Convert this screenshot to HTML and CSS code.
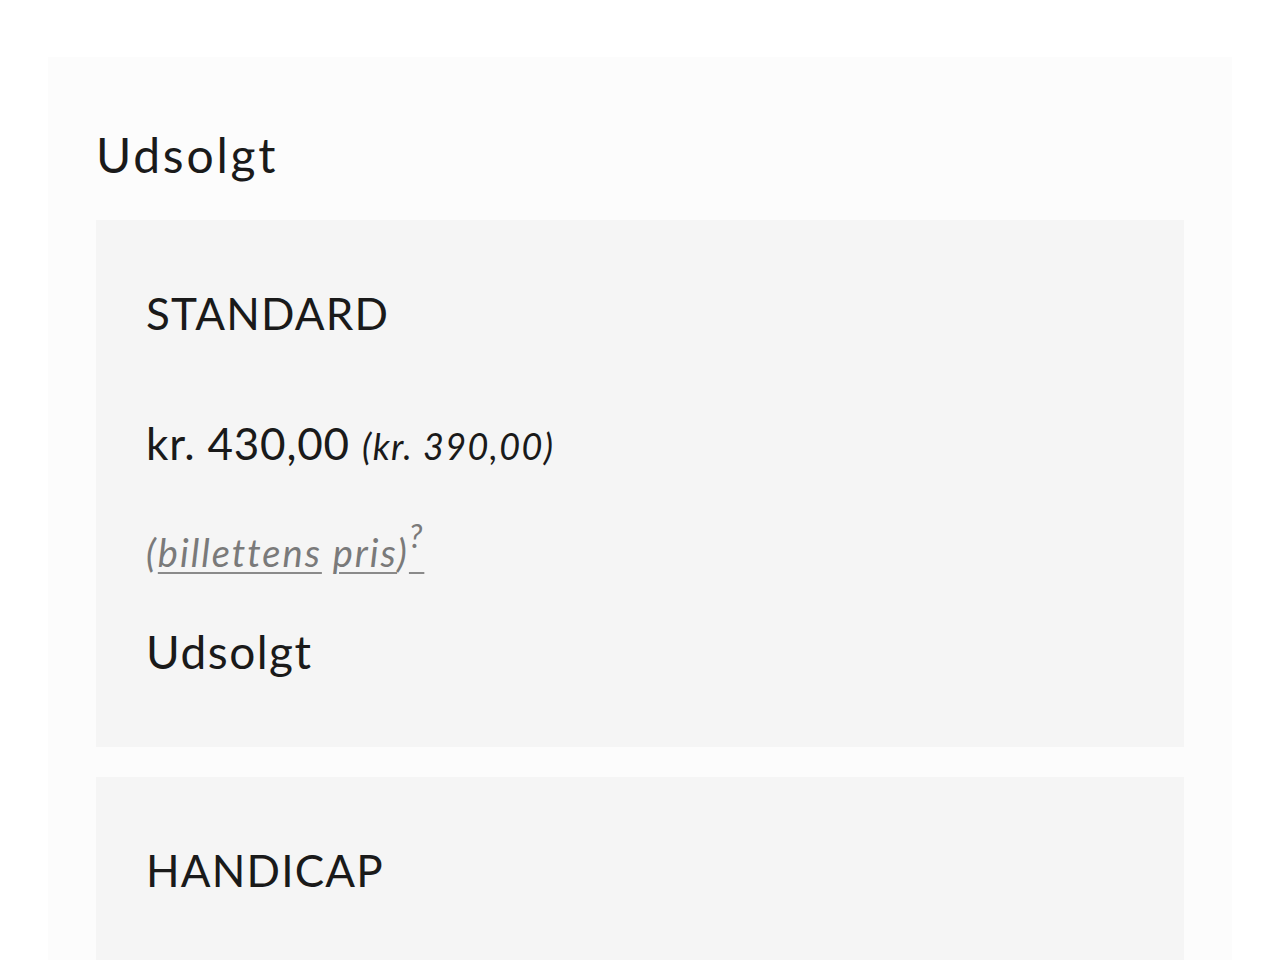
FILE: index.html
```html
<!DOCTYPE html>
<html lang="da">
<head>
<meta charset="utf-8">
<title>Billetter</title>
<link rel="stylesheet" href="styles.css">
</head>
<body>
<main class="panel">
  <h2 class="panel-title">Udsolgt</h2>
  <section class="ticket">
    <h3 class="ticket-name">STANDARD</h3>
    <p class="ticket-price">kr. 430,00 <em class="ticket-price-alt">(kr. 390,00)</em></p>
    <p class="ticket-note">(<a class="note-link" href="#">billettens</a> <a class="note-link" href="#">pris</a>)<a class="note-help" href="#"><sup>?</sup></a></p>
    <p class="ticket-status">Udsolgt</p>
  </section>
  <section class="ticket">
    <h3 class="ticket-name">HANDICAP</h3>
    <p class="ticket-price">kr. 430,00 <em class="ticket-price-alt">(kr. 390,00)</em></p>
    <p class="ticket-status">Udsolgt</p>
  </section>
</main>
</body>
</html>
```
FILE: styles.css
```css
html, body {
  margin: 0;
  padding: 0;
  background: #ffffff;
}
body {
  font-family: "Lato", "Liberation Sans", sans-serif;
  color: #1a1a1a;
  padding-top: 57px;
  padding-left: 48px;
  height: 960px;
  overflow: hidden;
  box-sizing: border-box;
}
.panel {
  width: 1184px;
  box-sizing: border-box;
  background: #fcfcfc;
  padding: 0 48px 48px 48px;
  display: flex;
  flex-direction: column;
  gap: 30px;
}
.panel-title {
  margin: 0;
  padding-top: 70px;
  margin-bottom: -30px;
  padding-bottom: 37px;
  font-size: 48px;
  font-weight: 400;
  line-height: 56px;
  letter-spacing: 2.8px;
}
.ticket {
  background: #f5f5f5;
  padding: 68px 50px 70px 50px;
  display: flex;
  flex-direction: column;
}
.ticket-name {
  margin: 0;
  font-size: 44px;
  font-weight: 400;
  line-height: 50px;
  letter-spacing: 1.2px;
}
.ticket-price {
  margin: 80px 0 0 0;
  font-size: 44px;
  line-height: 50px;
  letter-spacing: 0.8px;
}
.ticket-price-alt {
  font-size: 36px;
  letter-spacing: 1.4px;
}
.ticket-note {
  margin: 56px 0 0 0;
  font-size: 38px;
  line-height: 50px;
  font-style: italic;
  color: #7a7a7a;
  letter-spacing: 2px;
}
.note-link, .note-help {
  color: #7a7a7a;
  text-decoration: underline;
  text-decoration-color: #8a8a8a;
  text-decoration-thickness: 2px;
  text-underline-offset: 5px;
}
.note-help sup {
  font-size: 32px;
  line-height: 0;
  vertical-align: 0.6em;
}
.ticket-status {
  margin: 50px 0 0 0;
  font-size: 46px;
  line-height: 50px;
  letter-spacing: 1.5px;
}
```
